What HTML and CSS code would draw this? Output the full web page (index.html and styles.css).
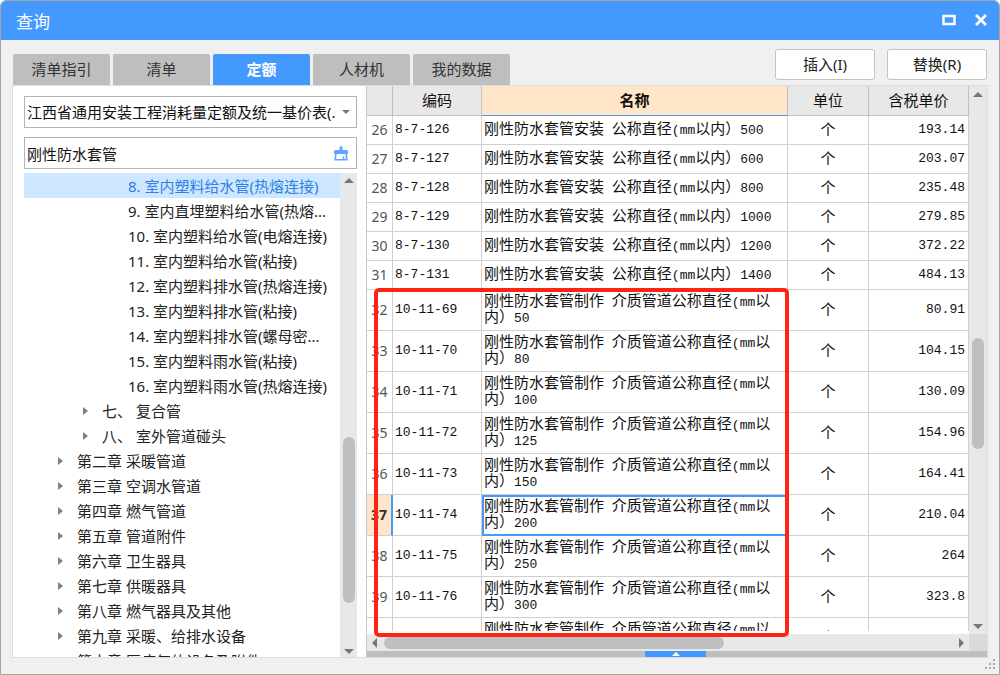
FILE: index.html
```
<!DOCTYPE html>
<html lang="zh-CN">
<head>
<meta charset="utf-8">
<title>查询</title>
<link rel="stylesheet" href="styles.css">
</head>
<body>
<main class="window">
  <header class="titlebar">
    <h1 class="title">查询</h1>
    <button class="winbtn" aria-label="最大化"><svg width="14" height="12" viewBox="0 0 14 12"><path d="M1.5 2h11v8h-11z" fill="none" stroke="#fff" stroke-width="2.4"/></svg></button>
    <button class="winbtn" aria-label="关闭"><svg width="14" height="12" viewBox="0 0 14 12"><path d="M2 1l10 10M12 1L2 11" stroke="#fff" stroke-width="2.8"/></svg></button>
  </header>

  <div class="toolbar">
    <nav class="tabs">
      <button class="tab">清单指引</button>
      <button class="tab">清单</button>
      <button class="tab active">定额</button>
      <button class="tab">人材机</button>
      <button class="tab">我的数据</button>
    </nav>
    <div class="actions">
      <button class="action">插入(I)</button>
      <button class="action">替换(R)</button>
    </div>
  </div>

  <div class="content">
    <aside class="side">
      <div class="field">
        <select class="control" aria-label="定额库"><option>江西省通用安装工程消耗量定额及统一基价表(.</option></select>
        <svg class="caret" width="8" height="4" viewBox="0 0 8 4"><path d="M0 0h8L4 4z" fill="#777"/></svg>
      </div>
      <div class="field">
        <input class="control" type="text" aria-label="搜索" value="刚性防水套管">
        <button class="clear" aria-label="清除"><svg width="16" height="16" viewBox="0 0 16 16"><path d="M6.500 2.500a1.500 1.500 0 0 1 3 0V5h4a1.500 1.500 0 0 1 1.500 1.500V9H1V6.500A1.500 1.500 0 0 1 2.500 5h4z" fill="#5ea6fb"/><path d="M2.800 9L2.200 14.700h11.600L13.200 9M10.500 14.500v-3" fill="none" stroke="#5ea6fb" stroke-width="1.600"/></svg></button>
      </div>
      <div class="treebox">
        <ul class="tree">
          <li class="node leaf selected">8. 室内塑料给水管(热熔连接)</li>
          <li class="node leaf">9. 室内直埋塑料给水管(热熔...</li>
          <li class="node leaf">10. 室内塑料给水管(电熔连接)</li>
          <li class="node leaf">11. 室内塑料给水管(粘接)</li>
          <li class="node leaf">12. 室内塑料排水管(热熔连接)</li>
          <li class="node leaf">13. 室内塑料排水管(粘接)</li>
          <li class="node leaf">14. 室内塑料排水管(螺母密...</li>
          <li class="node leaf">15. 室内塑料雨水管(粘接)</li>
          <li class="node leaf">16. 室内塑料雨水管(热熔连接)</li>
          <li class="node section">七、 复合管</li>
          <li class="node section">八、 室外管道碰头</li>
          <li class="node chapter">第二章 采暖管道</li>
          <li class="node chapter">第三章 空调水管道</li>
          <li class="node chapter">第四章 燃气管道</li>
          <li class="node chapter">第五章 管道附件</li>
          <li class="node chapter">第六章 卫生器具</li>
          <li class="node chapter">第七章 供暖器具</li>
          <li class="node chapter">第八章 燃气器具及其他</li>
          <li class="node chapter">第九章 采暖、给排水设备</li>
          <li class="node chapter">第十章 医疗气体设备及附件</li>
        </ul>
        <div class="vbar">
          <i class="arrow up"></i>
          <div class="track tree-track"><div class="thumb"></div></div>
          <i class="arrow down"></i>
        </div>
      </div>
    </aside>

    <section class="grid">
      <div class="gridmain">
        <div class="view">
          <table class="table">
            <colgroup><col class="c-no"><col class="c-code"><col><col class="c-unit"><col class="c-price"></colgroup>
            <thead>
              <tr><th></th><th>编码</th><th class="current">名称</th><th>单位</th><th>含税单价</th></tr>
            </thead>
            <tbody>
              <tr><th>26</th><td>8-7-126</td><td class="name">刚性防水套管安装<b> </b>公称直径<b>(mm</b>以内）<b>500</b></td><td>个</td><td>193.14</td></tr>
              <tr><th>27</th><td>8-7-127</td><td class="name">刚性防水套管安装<b> </b>公称直径<b>(mm</b>以内）<b>600</b></td><td>个</td><td>203.07</td></tr>
              <tr><th>28</th><td>8-7-128</td><td class="name">刚性防水套管安装<b> </b>公称直径<b>(mm</b>以内）<b>800</b></td><td>个</td><td>235.48</td></tr>
              <tr><th>29</th><td>8-7-129</td><td class="name">刚性防水套管安装<b> </b>公称直径<b>(mm</b>以内）<b>1000</b></td><td>个</td><td>279.85</td></tr>
              <tr><th>30</th><td>8-7-130</td><td class="name">刚性防水套管安装<b> </b>公称直径<b>(mm</b>以内）<b>1200</b></td><td>个</td><td>372.22</td></tr>
              <tr><th>31</th><td>8-7-131</td><td class="name">刚性防水套管安装<b> </b>公称直径<b>(mm</b>以内）<b>1400</b></td><td>个</td><td>484.13</td></tr>
              <tr class="tall"><th>32</th><td>10-11-69</td><td class="name">刚性防水套管制作<b> </b>介质管道公称直径<b>(mm</b>以内）<b>50</b></td><td>个</td><td>80.91</td></tr>
              <tr class="tall"><th>33</th><td>10-11-70</td><td class="name">刚性防水套管制作<b> </b>介质管道公称直径<b>(mm</b>以内）<b>80</b></td><td>个</td><td>104.15</td></tr>
              <tr class="tall"><th>34</th><td>10-11-71</td><td class="name">刚性防水套管制作<b> </b>介质管道公称直径<b>(mm</b>以内）<b>100</b></td><td>个</td><td>130.09</td></tr>
              <tr class="tall"><th>35</th><td>10-11-72</td><td class="name">刚性防水套管制作<b> </b>介质管道公称直径<b>(mm</b>以内）<b>125</b></td><td>个</td><td>154.96</td></tr>
              <tr class="tall"><th>36</th><td>10-11-73</td><td class="name">刚性防水套管制作<b> </b>介质管道公称直径<b>(mm</b>以内）<b>150</b></td><td>个</td><td>164.41</td></tr>
              <tr class="tall picked"><th>37</th><td>10-11-74</td><td class="name">刚性防水套管制作<b> </b>介质管道公称直径<b>(mm</b>以内）<b>200</b></td><td>个</td><td>210.04</td></tr>
              <tr class="tall"><th>38</th><td>10-11-75</td><td class="name">刚性防水套管制作<b> </b>介质管道公称直径<b>(mm</b>以内）<b>250</b></td><td>个</td><td>264</td></tr>
              <tr class="tall"><th>39</th><td>10-11-76</td><td class="name">刚性防水套管制作<b> </b>介质管道公称直径<b>(mm</b>以内）<b>300</b></td><td>个</td><td>323.8</td></tr>
              <tr class="tall"><th></th><td></td><td class="name">刚性防水套管制作<b> </b>介质管道公称直径<b>(mm</b>以内）<b>350</b></td><td>个</td><td></td></tr>
            </tbody>
          </table>
        </div>
        <div class="vbar wide">
          <i class="arrow up"></i>
          <div class="track grid-track"><div class="thumb"></div></div>
          <i class="arrow down"></i>
        </div>
      </div>
      <div class="hbar">
        <i class="arrow left"></i>
        <div class="htrack"><div class="hthumb"></div></div>
        <i class="arrow right"></i>
        <div class="corner"></div>
      </div>
      <div class="splitter"><button class="expand" aria-label="展开"><svg width="8" height="4" viewBox="0 0 8 4"><path d="M0 4h8L4 0z" fill="#fff"/></svg></button></div>
      <div class="highlight"></div>
    </section>
  </div>
  <svg class="grip" width="10" height="10" viewBox="0 0 10 10"><path d="M8 0h2v2H8zM4 4h2v2H4zM8 4h2v2H8zM0 8h2v2H0zM4 8h2v2H4zM8 8h2v2H8z" fill="#aaa"/></svg>
</main>
</body>
</html>
```
FILE: styles.css
```
* { box-sizing: border-box; }
body {
  margin: 0;
  background: #fff;
  font: 15px/20px "Noto Sans", "Noto Sans CJK SC", sans-serif;
  color: #222;
}
button, select, input { font: inherit; color: inherit; margin: 0; padding: 0; border: 0; background: none; border-radius: 0; }

.window {
  position: relative;
  display: flex;
  flex-direction: column;
  height: 100vh;
  padding-bottom: 16px;
  border: 1px solid #a5a5a5;
  border-radius: 6px 6px 0 0;
  background: #f0f0f0;
  overflow: hidden;
}
.titlebar {
  display: flex;
  align-items: center;
  gap: 16px;
  flex: none;
  height: 39px;
  padding: 3px 10px 0 15px;
  background: #4499ff;
}
.title { flex: 1; margin: 0; font-size: 17px; font-weight: 400; color: #fff; }
.winbtn { display: flex; justify-content: center; width: 16px; padding-bottom: 4px; }

.toolbar { display: flex; justify-content: space-between; flex: none; height: 45px; padding: 9px 12px 0; }
.tabs { display: flex; gap: 3px; align-items: flex-end; }
.tab { width: 97px; height: 31px; padding-bottom: 2px; border-radius: 2px 2px 0 0; background: #bebebe; color: #333; }
.tab.active { background: #4499ff; color: #fff; font-weight: 700; }
.actions { display: flex; gap: 12px; }
.action { width: 100px; height: 31px; padding-bottom: 2px; border: 1px solid #c3c3c3; border-radius: 3px; background: #fff; }

.content {
  display: flex;
  flex: 1;
  min-height: 0;
  margin: 0 11px;
  border: 1px solid #dcdcdc;
  background: #fff;
}
.side { display: flex; flex-direction: column; gap: 9px; flex: none; width: 353px; padding: 10px 9px 0 11px; }
.field { position: relative; flex: none; height: 32px; }
.control {
  display: block;
  width: 100%;
  height: 32px;
  padding: 0 20px 0 2px;
  border: 1px solid #b4b4b4;
  background: #fff;
  color: #111;
  appearance: none;
  outline: none;
}
.caret { position: absolute; right: 7px; top: 14px; pointer-events: none; }
.clear { position: absolute; right: 8px; top: 8px; height: 16px; line-height: 0; }

.treebox { display: flex; flex: 1; min-height: 0; margin-top: -5px; }
.tree { flex: 1; min-width: 0; margin: 0; padding: 0; list-style: none; overflow: hidden; }
.node { display: flex; align-items: center; height: 25px; padding-top: 1px; white-space: pre; }
.leaf { padding-left: 104px; }
.selected { background: #cce7ff; color: #2f7fe6; }
.section { padding-left: 59px; }
.chapter { padding-left: 34px; }
.section::before, .chapter::before {
  content: "";
  margin-right: 14px;
  border: 4px solid transparent;
  border-left: 5px solid #808080;
  border-right: 0;
}

.vbar { display: flex; flex-direction: column; align-items: center; flex: none; width: 17px; padding: 5px 0 3px; background: #e8e8e8; }
.wide { width: 18px; padding: 6px 0 5px; }
.arrow { flex: none; border: 5px solid transparent; }
.up { border-top: 0; border-bottom-color: #77777f; }
.down { border-bottom: 0; border-top-color: #77777f; }
.left { border-left: 0; border-right-color: #77777f; }
.right { border-right: 0; border-left-color: #77777f; }
.track { display: grid; flex: 1; width: 12px; }
.tree-track { grid-template-rows: 253fr 165fr 46fr; }
.grid-track { grid-template-rows: 239fr 110fr 173fr; }
.thumb { grid-row: 2; border-radius: 6px; background: #bfbfbf; }

.grid { position: relative; display: flex; flex-direction: column; flex: 1; min-width: 0; border-left: 1px solid #c8c8c8; }
.gridmain { display: flex; flex: 1; min-height: 0; }
.view { flex: 1; min-width: 0; margin-bottom: 3px; overflow: hidden; }
.table { width: 100%; table-layout: fixed; border-spacing: 0; font: 13px/16px "Liberation Mono", "Noto Sans CJK SC", monospace; color: #111; }
.c-no { width: 26px; }
.c-code { width: 89px; }
.c-unit { width: 81px; }
.c-price { width: 100px; }
.table th, .table td { height: 29px; padding: 0 2px; border: solid #d0d0d0; border-width: 0 1px 1px 0; font-weight: 400; }
.table thead th { height: 30px; padding-top: 5px; background: #e8e8e8; border-color: #c0c0c0; font-size: 15px; }
.table thead .current { background: #ffe6c8; border-bottom-color: #4499ff; font-weight: 700; }
.table tbody th { padding: 0; font: 14px/16px "Noto Sans", sans-serif; color: #555; }
.table .tall th, .table .tall td { height: 41px; }
.table .name { padding-top: 1px; font-size: 15px; }
.name b { font-size: 13px; font-weight: 400; white-space: pre-wrap; }
.table td:nth-child(4) { padding-top: 3px; text-align: center; font-size: 15px; }
.table td:nth-child(5) { padding-right: 3px; text-align: right; }
.table .picked th { background: #ffe6c8; border-right: 2px solid #4499ff; font-weight: 700; color: #333; }
.table .picked .name { outline: 2px solid #4499ff; outline-offset: -2px; }

.hbar { display: flex; align-items: center; flex: none; height: 17px; padding-left: 5px; background: #e8e8e8; }
.htrack { display: grid; grid-template-columns: 339fr 234fr; flex: 1; height: 12px; margin-left: 7px; }
.hthumb { border-radius: 6px; background: #bfbfbf; }
.corner { width: 18px; height: 17px; margin-left: 5px; background: #dadada; }
.splitter { display: flex; justify-content: center; flex: none; height: 6px; padding-right: 3px; background: #bebebe; }
.expand { display: flex; justify-content: center; align-items: center; width: 61px; height: 6px; background: #4499ff; }
.highlight { position: absolute; top: 202px; right: 198px; bottom: 20px; left: 7px; border: 4px solid #ff2316; border-radius: 5px; pointer-events: none; }
.grip { position: absolute; right: 4px; bottom: 5px; }
```
